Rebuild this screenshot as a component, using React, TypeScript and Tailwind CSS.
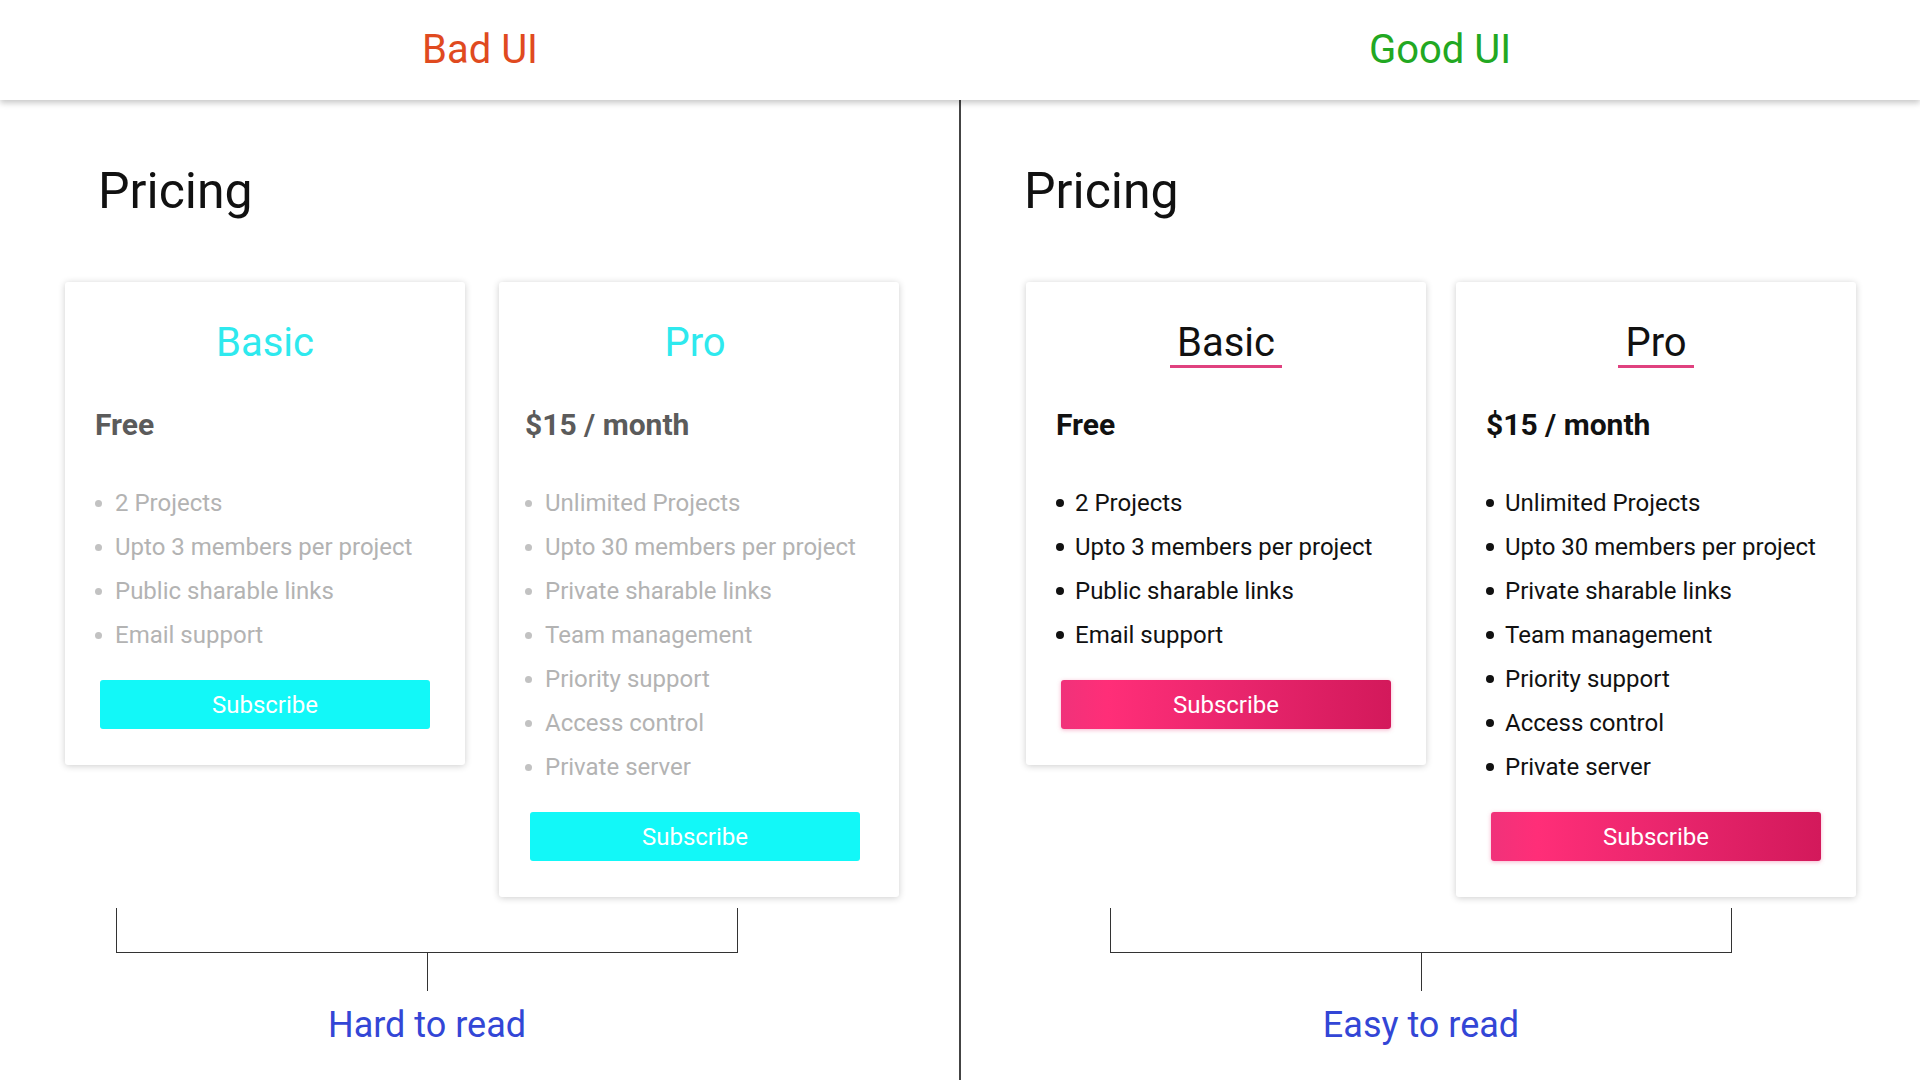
import React from "react";

type Variant = "bad" | "good";

const basicFeatures = ["2 Projects", "Upto 3 members per project", "Public sharable links", "Email support"];
const proFeatures = [
  "Unlimited Projects",
  "Upto 30 members per project",
  "Private sharable links",
  "Team management",
  "Priority support",
  "Access control",
  "Private server",
];

interface PlanCardProps {
  name: string;
  price: string;
  features: string[];
  variant: Variant;
  pad?: string;
}

const PlanCard = ({ name, price, features, variant, pad = "px-[30px]" }: PlanCardProps) => {
  const good = variant === "good";
  return (
    <div className={`w-[400px] shrink-0 rounded-[3px] bg-white pt-[39px] pb-[36px] shadow-[0_1px_7px_rgba(0,0,0,0.2)] ${pad}`}>
      <div className="flex justify-center">
        <h3
          className={`border-b-[3px] px-[7px] text-[40px] leading-[44px] font-normal ${
            good ? "border-[#e0417f] text-[#111111]" : "border-transparent text-[#2ee9ee]"
          }`}
        >
          {name}
        </h3>
      </div>
      <p className={`mt-[39px] text-[30px] leading-[36px] font-bold ${good ? "text-[#111111]" : "text-[#5b5b5b]"}`}>
        {price}
      </p>
      <ul className="mt-[38px]">
        {features.map((f) => (
          <li
            key={f}
            className={`flex h-[44px] items-center text-[24px] leading-[44px] ${
              good ? "gap-[11px] text-[#111111]" : "gap-[13px] text-[#b3b3b3]"
            }`}
          >
            <span
              className={`block shrink-0 rounded-full ${
                good ? "h-[8px] w-[8px] bg-[#111111]" : "h-[7px] w-[7px] bg-[#c2c2c2]"
              }`}
            />
            <span>{f}</span>
          </li>
        ))}
      </ul>
      <button
        className={`mx-[5px] mt-[23px] flex h-[49px] w-[330px] items-center justify-center rounded-[3px] text-[24px] text-white ${
          good
            ? "bg-[linear-gradient(90deg,#f0327a_0%,#ff2e78_14%,#e8256c_55%,#d3195b_100%)] shadow-[0_1px_4px_rgba(230,40,110,0.35)]"
            : "bg-[#12f8f8]"
        }`}
      >
        Subscribe
      </button>
    </div>
  );
};

interface SideProps {
  variant: Variant;
  label: string;
}

const Side = ({ variant, label }: SideProps) => {
  const good = variant === "good";
  return (
    <div className="flex flex-col">
      <h2 className={`mt-[63px] text-[50px] leading-[56px] text-[#111111] ${good ? "pl-[63px]" : "pl-[98px]"}`}>
        Pricing
      </h2>

      {/* Cards */}
      <div className={`mt-[63px] flex items-start pl-[65px] ${good ? "gap-[30px]" : "gap-[34px]"}`}>
        <PlanCard name="Basic" price="Free" features={basicFeatures} variant={variant} />
        <PlanCard
          name="Pro"
          price="$15 / month"
          features={proFeatures}
          variant={variant}
          pad={good ? "px-[30px]" : "pl-[26px] pr-[34px]"}
        />
      </div>

      {/* Bracket + caption */}
      <div className={`mt-[11px] w-[622px] ${good ? "ml-[149px]" : "ml-[116px]"}`}>
        <div className="h-[45px] border-x border-b border-[#333333]" />
        <div className="mx-auto h-[38px] w-px bg-[#333333]" />
        <p className="mt-[13px] text-center text-[36px] leading-[42px] text-[#3346d6]">{label}</p>
      </div>
    </div>
  );
};

export default function App() {
  return (
    <div className="min-h-screen w-[1920px] bg-white font-['Roboto',sans-serif]">
      <header className="relative z-10 flex h-[100px] items-center bg-white shadow-[0_3px_6px_rgba(0,0,0,0.22)]">
        <div className="flex flex-1 justify-center">
          <span className="text-[40px] leading-[40px] text-[#e04a1f]">Bad UI</span>
        </div>
        <div className="flex flex-1 justify-center">
          <span className="text-[40px] leading-[40px] text-[#22a822]">Good UI</span>
        </div>
      </header>

      <main className="grid h-[980px] grid-cols-[959px_2px_959px]">
        <Side variant="bad" label="Hard to read" />
        <div className="bg-[#444444]" />
        <Side variant="good" label="Easy to read" />
      </main>
    </div>
  );
}
